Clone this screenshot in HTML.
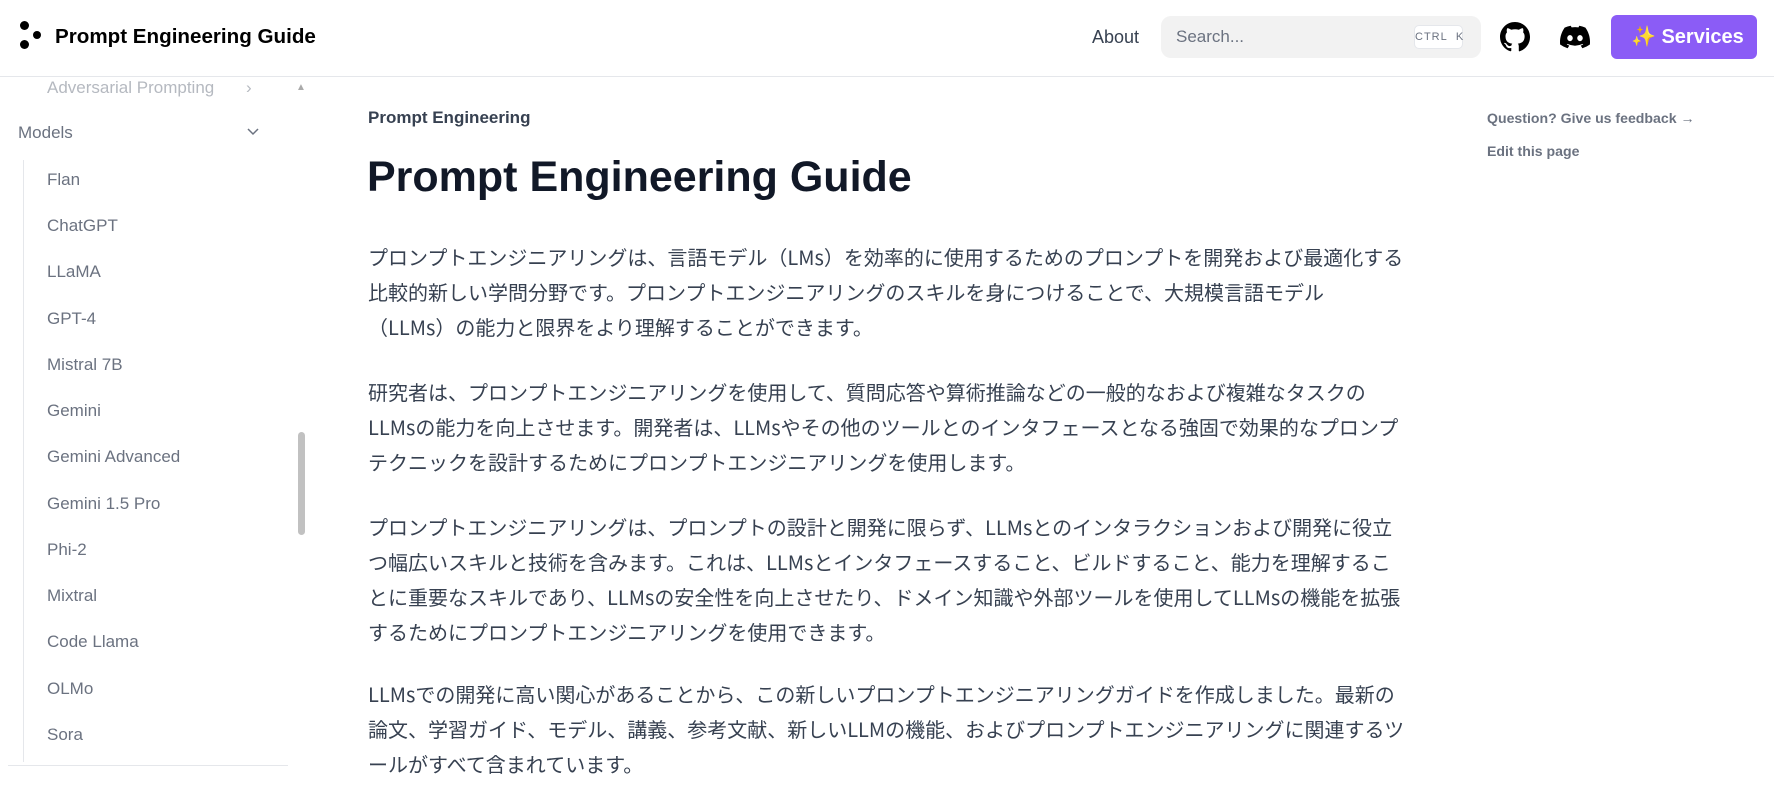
<!DOCTYPE html>
<html><head><meta charset="utf-8"><style>
*{margin:0;padding:0;box-sizing:border-box}
body{width:1774px;height:791px;overflow:hidden;background:#fff;font-family:"Liberation Sans","Noto Sans CJK JP",sans-serif;position:relative}
.hdr{position:absolute;left:0;top:0;width:1774px;height:77px;border-bottom:1px solid #e5e7eb}
.abs{position:absolute}
.side{color:#6b7280;font-size:17px}
.side div{position:absolute;left:47px;line-height:20px;white-space:nowrap}
.p{position:absolute;left:368px;font-size:20px;line-height:35px;color:#374151;white-space:nowrap;font-family:"Noto Sans CJK JP","Liberation Sans",sans-serif}
</style></head><body>
<div class="hdr">
 <div class="abs" style="left:20px;top:21px;width:9px;height:9px;border-radius:50%;background:#000"></div>
 <div class="abs" style="left:20px;top:40px;width:9px;height:9px;border-radius:50%;background:#000"></div>
 <div class="abs" style="left:33px;top:31px;width:8px;height:8px;border-radius:50%;background:#000"></div>
 <div class="abs" style="left:55px;top:25px;font-size:20.6px;font-weight:bold;color:#000">Prompt Engineering Guide</div>
 <div class="abs" style="left:1092px;top:27px;font-size:18px;color:#374151">About</div>
 <div class="abs" style="left:1161px;top:16px;width:320px;height:42px;border-radius:10px;background:#f2f2f2"></div>
 <div class="abs" style="left:1176px;top:27px;font-size:17px;color:#6b7280">Search...</div>
 <div class="abs" style="left:1414px;top:25px;width:49px;height:24px;border-radius:5px;background:#fff;border:1px solid #e5e7eb;font-size:11px;color:#6b7280;text-align:center;line-height:22px;letter-spacing:1px">CTRL&nbsp;&nbsp;K</div>
 <svg class="abs" style="left:1500px;top:22px" width="30" height="30" viewBox="0 0 16 16"><path fill="#000" d="M8 0C3.58 0 0 3.580 0 8c0 3.54 2.29 6.53 5.47 7.59.4.07.55-.17.55-.38v-1.34c-2.23.48-2.7-1.07-2.7-1.07-.36-.93-.89-1.17-.89-1.170-.73-.5.06-.49.06-.49.8.06 1.23.82 1.23.82.72 1.23 1.88.87 2.34.67.07-.52.28-.87.51-1.070-1.78-.2-3.64-.89-3.64-3.95 0-.87.31-1.59.82-2.15-.08-.2-.36-1.02.08-2.12 0 0 .67-.21 2.2.82a7.6 7.6 0 0 1 4 0c1.53-1.04 2.2-.82 2.2-.82.44 1.1.16 1.92.08 2.12.51.56.82 1.27.82 2.15 0 3.07-1.87 3.75-3.65 3.95.29.25.54.73.54 1.48v2.2c0 .21.15.46.55.38A8.01 8.01 0 0 0 16 8c0-4.42-3.58-8-8-8z"/></svg>
 <svg class="abs" style="left:1560px;top:24px" width="30" height="26" viewBox="0 0 24 18"><path fill="#000" d="M20.3 1.5A19.8 19.8 0 0 0 15.4 0l-.6 1.3a18.4 18.4 0 0 0-5.5 0L8.6 0a19.7 19.7 0 0 0-4.9 1.5C.6 6.1-.3 10.6.1 15a19.9 19.9 0 0 0 6 3l1.3-2.1a13 13 0 0 1-2-1l.5-.4a14.2 14.2 0 0 0 12.2 0l.5.4c-.6.4-1.3.7-2 1l1.3 2.1a19.8 19.8 0 0 0 6-3c.5-5.1-.8-9.6-3.6-13.5zM8 12.3c-1.2 0-2.2-1.1-2.2-2.4S6.8 7.5 8 7.5s2.2 1.1 2.2 2.4-1 2.4-2.2 2.4zm8 0c-1.2 0-2.2-1.1-2.2-2.4s1-2.4 2.2-2.4 2.2 1.1 2.2 2.4-1 2.4-2.2 2.4z"/></svg>
 <div class="abs" style="left:1611px;top:15px;width:146px;height:44px;border-radius:6px;background:#8b5cf6;color:#fff;font-size:20px;font-weight:bold;line-height:44px;padding-left:20px">✨ Services</div>
</div>
<div class="side">
 <div style="top:78px;color:#b5b9c0">Adversarial Prompting</div>
 <div class="abs" style="left:246px;top:78px;color:#b5b9c0">›</div>
 <div class="abs" style="left:296px;top:78px;font-size:10px;color:#aaa">▲</div>
 <div style="left:18px;top:123px;color:#6b7280">Models</div>
 <svg class="abs" style="left:246px;top:127px" width="14" height="10" viewBox="0 0 14 10"><path d="M2 2l5 5 5-5" stroke="#6b7280" stroke-width="1.5" fill="none"/></svg>
 <div class="abs" style="left:23px;top:160px;width:1px;height:602px;background:#e5e7eb"></div>
 <div style="top:170px">Flan</div>
 <div style="top:216px">ChatGPT</div>
 <div style="top:262px">LLaMA</div>
 <div style="top:309px">GPT-4</div>
 <div style="top:355px">Mistral 7B</div>
 <div style="top:401px">Gemini</div>
 <div style="top:447px">Gemini Advanced</div>
 <div style="top:494px">Gemini 1.5 Pro</div>
 <div style="top:540px">Phi-2</div>
 <div style="top:586px">Mixtral</div>
 <div style="top:632px">Code Llama</div>
 <div style="top:679px">OLMo</div>
 <div style="top:725px">Sora</div>
 <div class="abs" style="left:8px;top:765px;width:280px;height:1px;background:#e5e7eb"></div>
 <div class="abs" style="left:298px;top:432px;width:7px;height:103px;border-radius:4px;background:#c1c1c1"></div>
</div>
<div class="abs" style="left:368px;top:108px;font-size:17px;font-weight:600;color:#374151">Prompt Engineering</div>
<div class="abs" style="left:367px;top:153px;font-size:43px;font-weight:bold;color:#111827">Prompt Engineering Guide</div>
<div class="p" style="top:239px">プロンプトエンジニアリングは、言語モデル（LMs）を効率的に使用するためのプロンプトを開発および最適化する<br>比較的新しい学問分野です。プロンプトエンジニアリングのスキルを身につけることで、大規模言語モデル<br>（LLMs）の能力と限界をより理解することができます。</div>
<div class="p" style="top:374px">研究者は、プロンプトエンジニアリングを使用して、質問応答や算術推論などの一般的なおよび複雑なタスクの<br>LLMsの能力を向上させます。開発者は、LLMsやその他のツールとのインタフェースとなる強固で効果的なプロンプ<br>テクニックを設計するためにプロンプトエンジニアリングを使用します。</div>
<div class="p" style="top:509px">プロンプトエンジニアリングは、プロンプトの設計と開発に限らず、LLMsとのインタラクションおよび開発に役立<br>つ幅広いスキルと技術を含みます。これは、LLMsとインタフェースすること、ビルドすること、能力を理解するこ<br>とに重要なスキルであり、LLMsの安全性を向上させたり、ドメイン知識や外部ツールを使用してLLMsの機能を拡張<br>するためにプロンプトエンジニアリングを使用できます。</div>
<div class="p" style="top:676px">LLMsでの開発に高い関心があることから、この新しいプロンプトエンジニアリングガイドを作成しました。最新の<br>論文、学習ガイド、モデル、講義、参考文献、新しいLLMの機能、およびプロンプトエンジニアリングに関連するツ<br>ールがすべて含まれています。</div>
<div class="abs" style="left:1487px;top:110px;font-size:14.1px;font-weight:600;color:#6b7280">Question? Give us feedback →</div>
<div class="abs" style="left:1487px;top:143px;font-size:14.1px;font-weight:600;color:#6b7280">Edit this page</div>
</body></html>
